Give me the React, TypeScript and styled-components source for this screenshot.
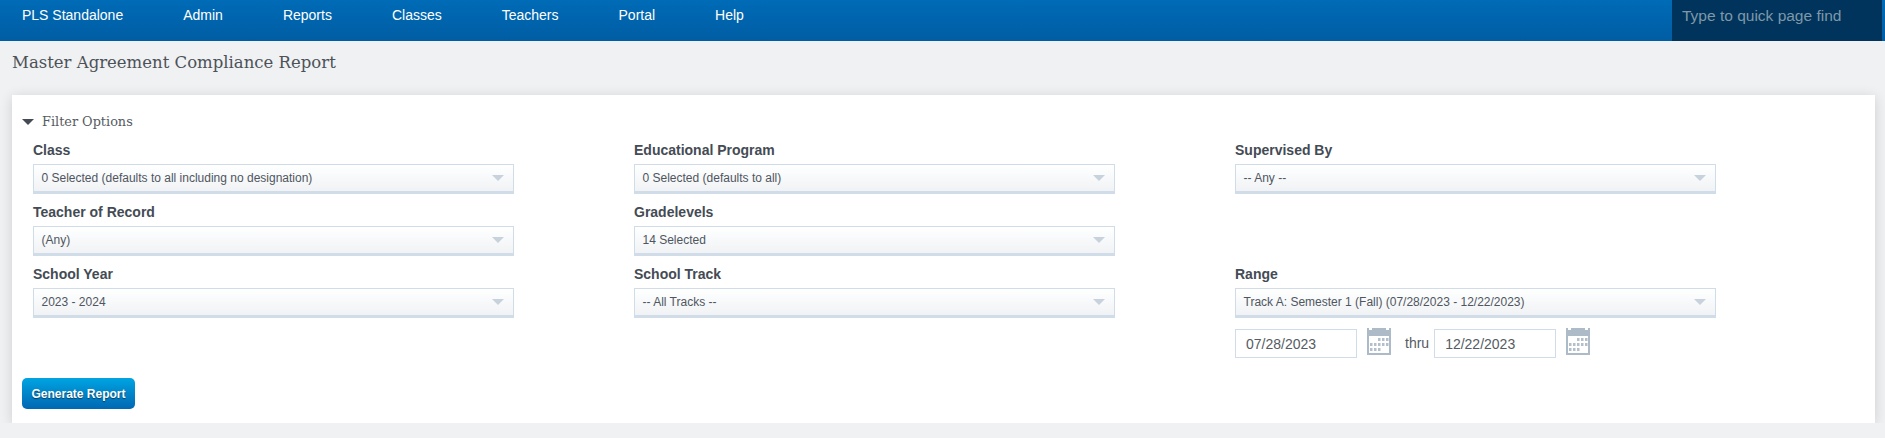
import styled, { createGlobalStyle } from 'styled-components'

const NAV_ITEMS = ['PLS Standalone', 'Admin', 'Reports', 'Classes', 'Teachers', 'Portal', 'Help']

const GlobalStyle = createGlobalStyle`
  body {
    margin: 0;
    background: #f0f1f3;
    font-family: "Liberation Sans", Arial, sans-serif;
    color: #444b54;
  }
`

const CalendarIcon = () => (
  <CalendarSvg viewBox="0 0 24 27" aria-hidden="true">
    <path d="M0 0h2v2h3V0h14v2h3V0h2v27H0z" fill="#adbac7" />
    <rect x="2" y="8" width="20" height="17" fill="#fff" />
    <g fill="#b3bfca">
      <rect x="11" y="10" width="2.5" height="3" />
      <rect x="15" y="10" width="2.5" height="3" />
      <rect x="19" y="10" width="2.5" height="3" />
      <rect x="3" y="15" width="2.5" height="3" />
      <rect x="7" y="15" width="2.5" height="3" />
      <rect x="11" y="15" width="2.5" height="3" />
      <rect x="15" y="15" width="2.5" height="3" />
      <rect x="19" y="15" width="2.5" height="3" />
      <rect x="3" y="20" width="2.5" height="3" />
      <rect x="7" y="20" width="2.5" height="3" />
      <rect x="11" y="20" width="2.5" height="3" />
    </g>
  </CalendarSvg>
)

const SelectField = ({ label, value }: { label: string; value: string }) => (
  <Field>
    <Label>{label}</Label>
    <Select>
      <span>{value}</span>
      <Arrow />
    </Select>
  </Field>
)

export default function App() {
  return (
    <>
      <GlobalStyle />
      <Nav>
        <NavList>
          {NAV_ITEMS.map((item) => (
            <NavItem key={item}>{item}</NavItem>
          ))}
        </NavList>
        <QuickFind placeholder="Type to quick page find" />
      </Nav>
      <Title>Master Agreement Compliance Report</Title>
      <Card>
        <FilterHeading>
          <Caret />
          Filter Options
        </FilterHeading>
        <FilterGrid>
          <SelectField label="Class" value="0 Selected (defaults to all including no designation)" />
          <SelectField label="Educational Program" value="0 Selected (defaults to all)" />
          <SelectField label="Supervised By" value="-- Any --" />
          <SelectField label="Teacher of Record" value="(Any)" />
          <SelectField label="Gradelevels" value="14 Selected" />
          <div />
          <SelectField label="School Year" value="2023 - 2024" />
          <SelectField label="School Track" value="-- All Tracks --" />
          <div>
            <SelectField label="Range" value="Track A: Semester 1 (Fall) (07/28/2023 - 12/22/2023)" />
            <DateRow>
              <DateInput defaultValue="07/28/2023" />
              <CalendarIcon />
              <Thru>thru</Thru>
              <DateInput defaultValue="12/22/2023" />
              <CalendarIcon />
            </DateRow>
          </div>
        </FilterGrid>
        <GenerateButton>Generate Report</GenerateButton>
      </Card>
    </>
  )
}

const Nav = styled.header`
  display: flex;
  justify-content: space-between;
  height: 41px;
  padding: 0 3px 0 22px;
  background: linear-gradient(#006bb7, #005da3);
`

const NavList = styled.nav`
  display: flex;
  gap: 60px;
`

const NavItem = styled.a`
  font-size: 14px;
  line-height: 30px;
  color: #fff;
`

const QuickFind = styled.input`
  box-sizing: border-box;
  width: 210px;
  height: 41px;
  padding: 0 0 10px 10px;
  border: 0;
  outline: 0;
  background: #00345c;
  color: #fff;
  font-family: inherit;
  font-size: 15.5px;

  &::placeholder {
    color: #7f98a8;
    opacity: 1;
  }
`

const Title = styled.h1`
  margin: 0 0 11px;
  padding: 1px 0 0 12px;
  font-family: "DejaVu Serif", serif;
  font-size: 16.5px;
  font-weight: 400;
  line-height: 42px;
  color: #4c5258;
`

const Card = styled.main`
  margin: 0 10px 0 12px;
  padding: 17px 21px 14px 10px;
  background: #fff;
  box-shadow: 0 2px 12px rgba(0, 0, 0, 0.14);
`

const FilterHeading = styled.h2`
  display: flex;
  align-items: center;
  gap: 8px;
  margin: 0 0 12px;
  font-family: "DejaVu Serif", serif;
  font-size: 12.85px;
  font-weight: 400;
  line-height: 20px;
  color: #555b62;
`

const Caret = styled.span`
  width: 0;
  height: 0;
  border-left: 6px solid transparent;
  border-right: 6px solid transparent;
  border-top: 6px solid #444b54;
`

const FilterGrid = styled.div`
  display: grid;
  grid-template-columns: repeat(3, 601px);
  row-gap: 12px;
  margin-left: 11px;
`

const Field = styled.div`
  width: 481px;
`

const Label = styled.label`
  display: block;
  margin-bottom: 8px;
  font-size: 14px;
  font-weight: 700;
  line-height: 12px;
  color: #444b54;
`

const Select = styled.div`
  box-sizing: border-box;
  display: flex;
  align-items: center;
  justify-content: space-between;
  height: 30px;
  padding: 0 9px 0 7.5px;
  border: 1.5px solid #d0dce8;
  border-bottom-width: 3px;
  background: linear-gradient(#fff, #f0f2f5);
  font-size: 12px;
  color: #4f565e;
`

const Arrow = styled.span`
  width: 0;
  height: 0;
  border-left: 6px solid transparent;
  border-right: 6px solid transparent;
  border-top: 6px solid #c8d2dc;
`

const DateRow = styled.div`
  display: flex;
  align-items: flex-start;
  margin-top: 11px;
`

const DateInput = styled.input`
  box-sizing: border-box;
  width: 122px;
  height: 29px;
  padding: 0 0 0 10px;
  border: 1.5px solid #d0dce8;
  outline: 0;
  background: #fff;
  color: #555b62;
  font-family: inherit;
  font-size: 14px;
`

const CalendarSvg = styled.svg`
  flex: none;
  width: 24px;
  height: 27px;
  margin: -1px 0 0 10px;
`

const Thru = styled.span`
  margin: 0 5px 0 14px;
  font-size: 14px;
  line-height: 29px;
  color: #555b62;
`

const GenerateButton = styled.button`
  display: block;
  width: 113px;
  height: 31px;
  margin-top: 20px;
  padding: 0;
  border: 0;
  border-radius: 5px;
  background: linear-gradient(#00a4e1, #0067b3);
  color: #fff;
  font-family: inherit;
  font-size: 12px;
  font-weight: 700;
  text-shadow: 0 1px 1px rgba(0, 0, 0, 0.5);
`
